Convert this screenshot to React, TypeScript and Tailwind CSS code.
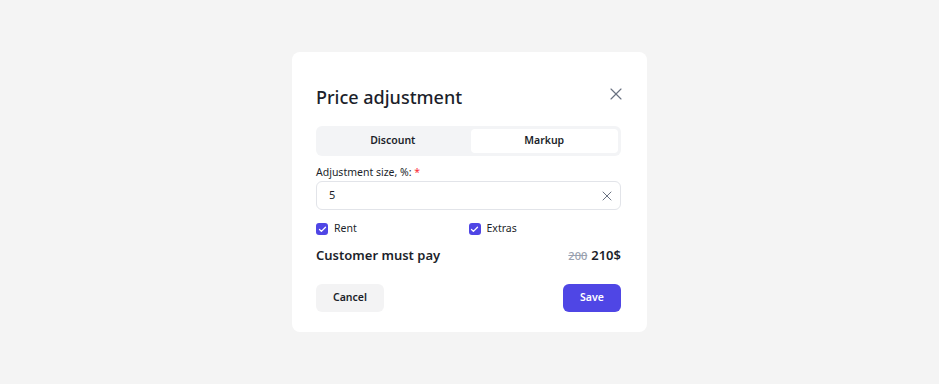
import { X, Check } from "lucide-react";

export default function App() {
  return (
    <div
      className="w-[939px] h-[384px] bg-[#f4f4f4] flex justify-center pt-[52px]"
      style={{ fontFamily: '"Noto Sans", "Open Sans", sans-serif' }}
    >
      <div className="w-[355px] h-[280px] bg-white rounded-lg pl-6 pr-[26px] pt-[31px] flex flex-col text-[#1c1f2b]">
        {/* Header */}
        <div className="flex items-center justify-between h-7">
          <h1 className="text-[18px] font-medium leading-7">Price adjustment</h1>
          <button className="text-gray-500 -mr-[5px] -mt-1.5">
            <X className="w-5 h-5" strokeWidth={1.4} />
          </button>
        </div>

        {/* Tabs */}
        <div className="mt-[15px] h-[30px] bg-[#f3f4f6] rounded-md p-[3px] grid grid-cols-2 gap-1">
          <button className="text-[10.5px] font-semibold rounded">Discount</button>
          <button className="text-[10.5px] font-semibold rounded bg-white">Markup</button>
        </div>

        {/* Field */}
        <label className="mt-2 text-[10.5px] leading-4 h-4 block">
          Adjustment size, %: <span className="text-red-500">*</span>
        </label>
        <div className="h-[29px] mt-[1px] border border-[#e2e4e9] rounded-md flex items-center pl-3 pr-[5px]">
          <span className="text-[11px] flex-1">5</span>
          <X className="w-4 h-4 text-gray-500" strokeWidth={1.5} />
        </div>

        {/* Checkboxes */}
        <div className="mt-[9px] h-5 grid grid-cols-2 text-[10.5px]">
          <div className="flex items-center gap-1.5">
            <span className="w-3 h-3 rounded-[3px] bg-[#4f46e5] flex items-center justify-center">
              <Check className="w-[9px] h-[9px] text-white" strokeWidth={3.5} />
            </span>
            Rent
          </div>
          <div className="flex items-center gap-1.5">
            <span className="w-3 h-3 rounded-[3px] bg-[#4f46e5] flex items-center justify-center">
              <Check className="w-[9px] h-[9px] text-white" strokeWidth={3.5} />
            </span>
            Extras
          </div>
        </div>

        {/* Total */}
        <div className="mt-1.5 h-[22px] flex items-center justify-between">
          <span className="text-[13px] font-semibold">Customer must pay</span>
          <span className="flex items-baseline gap-1">
            <span className="text-[11px] font-medium text-gray-400 line-through">200</span>
            <span className="text-[13px] font-semibold">210$</span>
          </span>
        </div>

        {/* Actions */}
        <div className="mt-[17px] flex items-center justify-between">
          <button className="h-[28px] w-[68px] rounded-md bg-[#f3f3f4] text-[10.5px] font-semibold">
            Cancel
          </button>
          <button className="h-[28px] w-[58px] rounded-md bg-[#4f46e5] text-white text-[10.5px] font-semibold">
            Save
          </button>
        </div>
      </div>
    </div>
  );
}
